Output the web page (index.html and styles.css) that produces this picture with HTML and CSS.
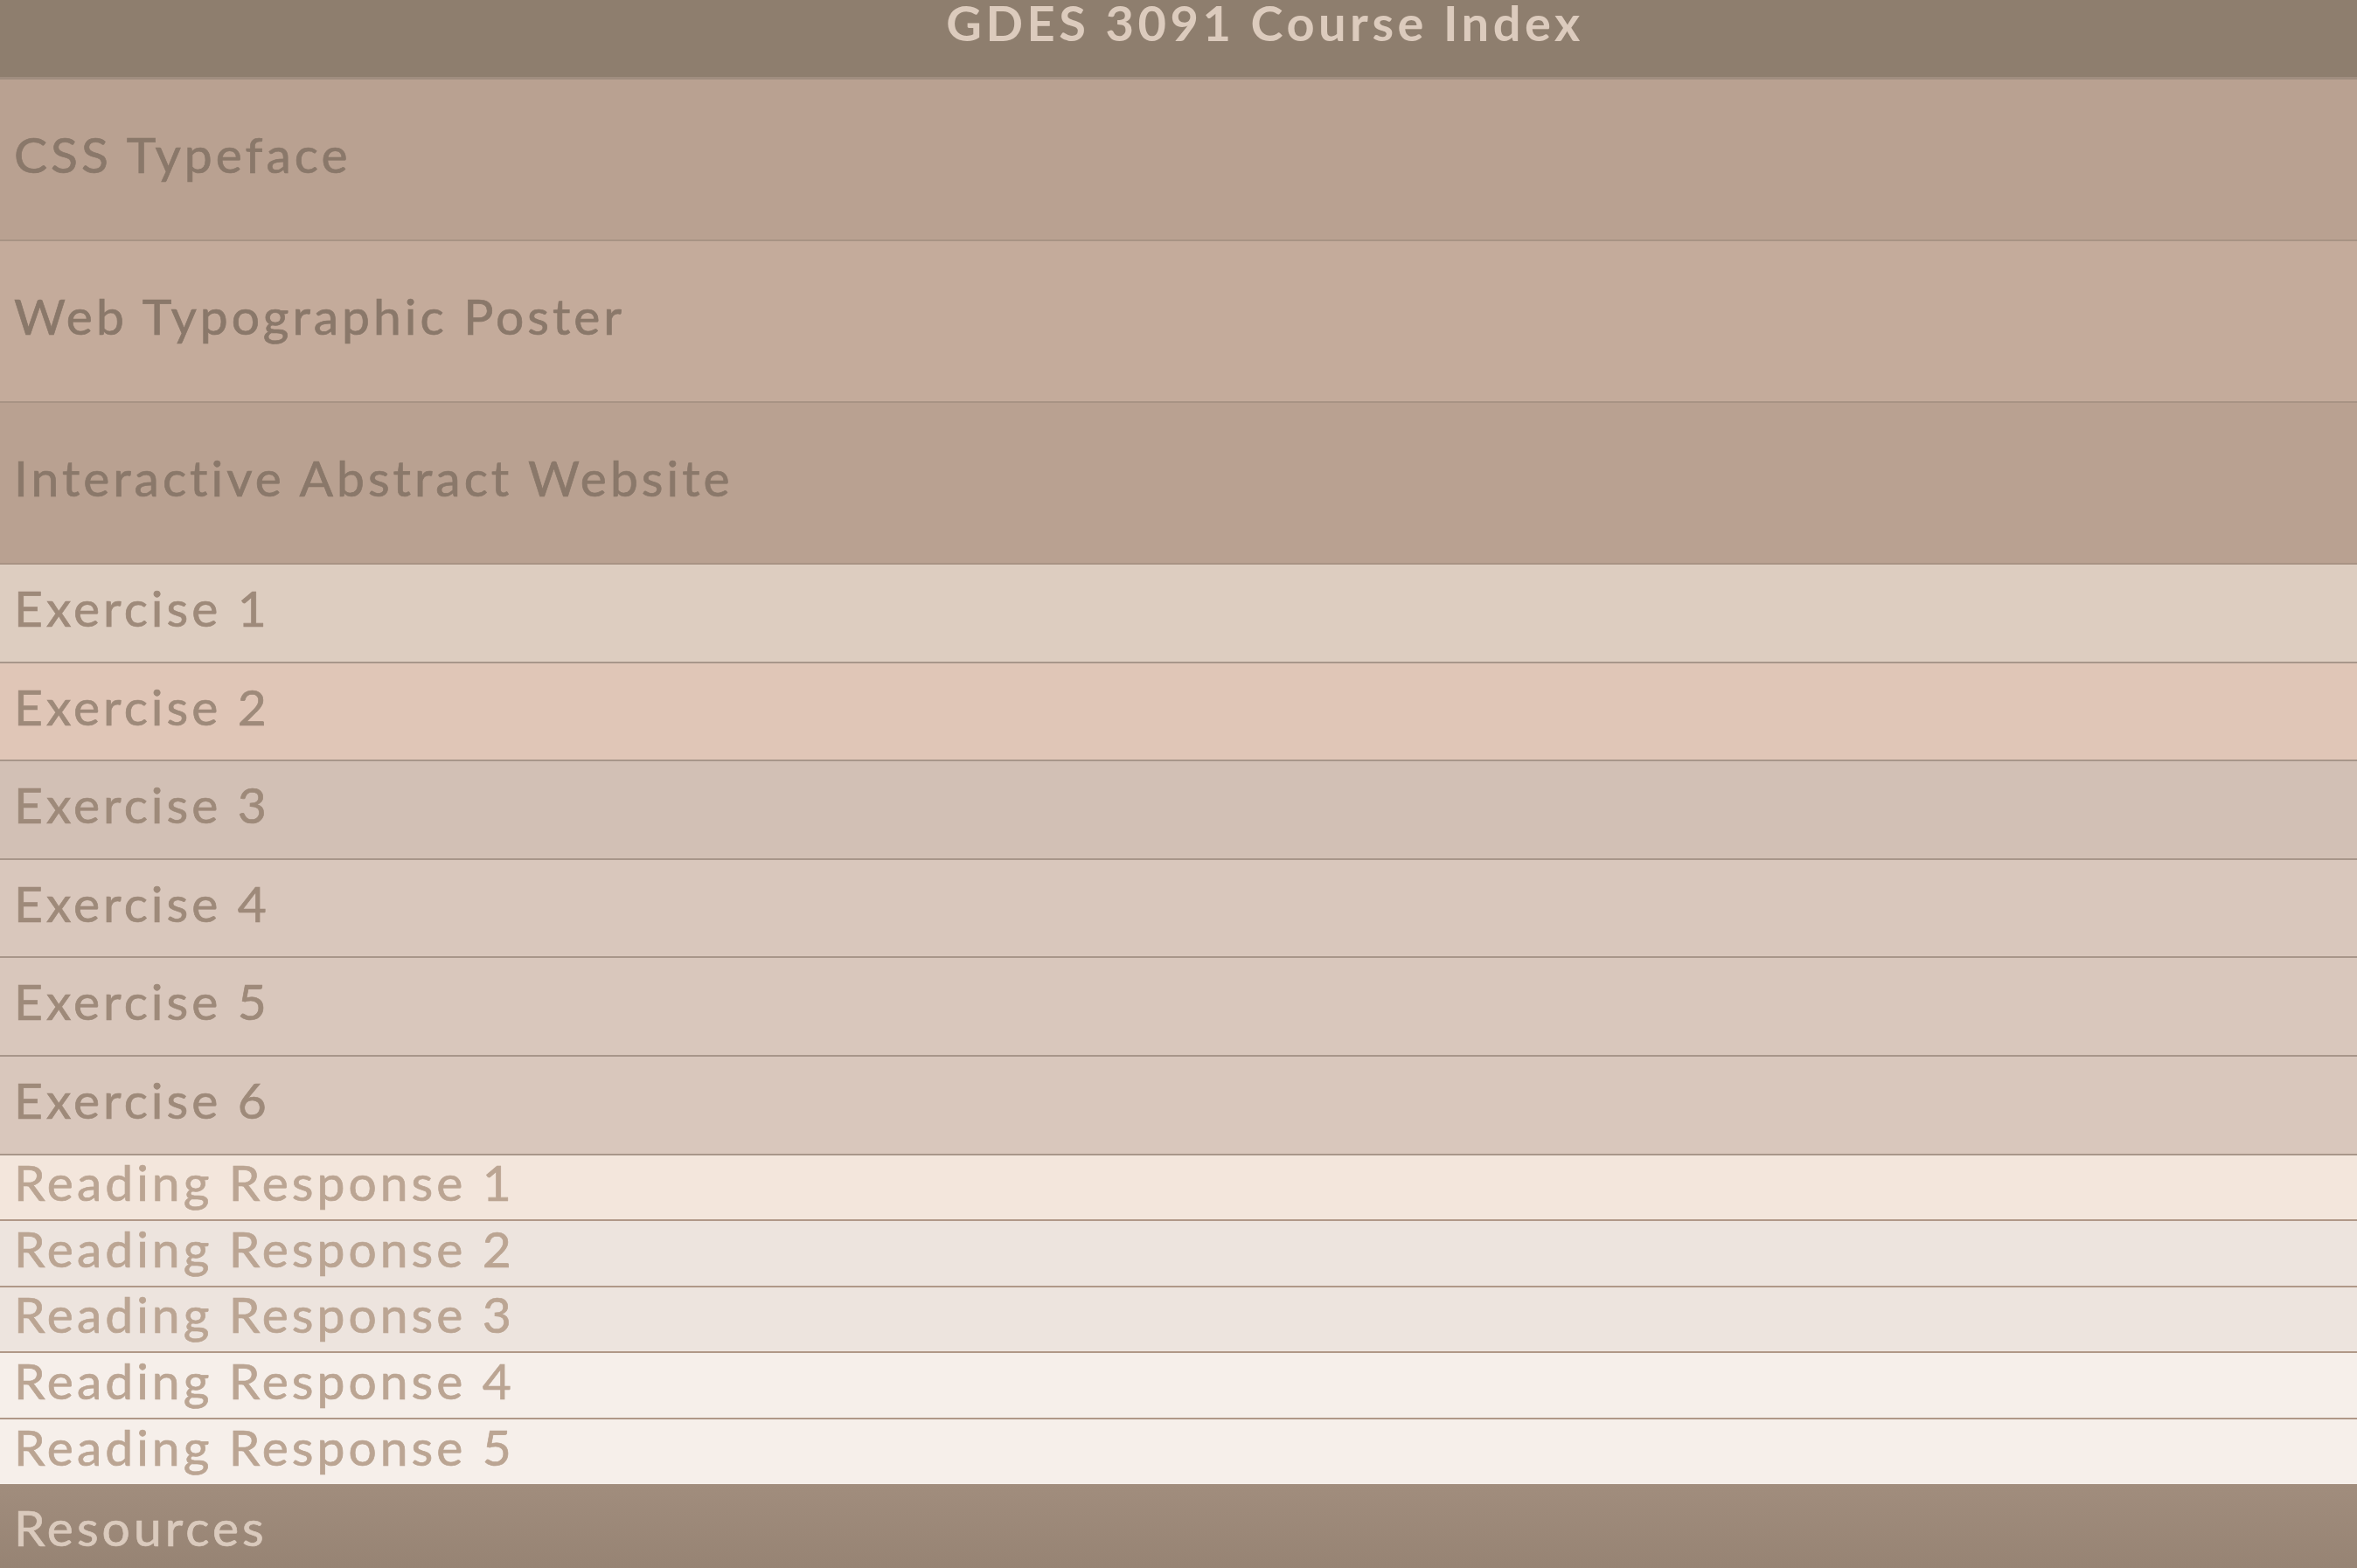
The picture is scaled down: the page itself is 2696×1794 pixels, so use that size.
FILE: index.html
```html
<!DOCTYPE html>
<html lang="en">
<head>
<meta charset="utf-8">
<title>GDES 3091 Course Index</title>
<link rel="stylesheet" href="styles.css">
</head>
<body>
<header class="site-header">
  <h1 class="site-title">GDES 3091 Course Index</h1>
</header>
<nav class="index">
  <a class="row row-project row-p1" href="#">CSS Typeface</a>
  <a class="row row-project row-p2" href="#">Web Typographic Poster</a>
  <a class="row row-project row-p3" href="#">Interactive Abstract Website</a>
  <a class="row row-exercise row-e1" href="#">Exercise 1</a>
  <a class="row row-exercise row-e2" href="#">Exercise 2</a>
  <a class="row row-exercise row-e3" href="#">Exercise 3</a>
  <a class="row row-exercise row-e4" href="#">Exercise 4</a>
  <a class="row row-exercise row-e5" href="#">Exercise 5</a>
  <a class="row row-exercise row-e6" href="#">Exercise 6</a>
  <a class="row row-reading row-r1" href="#">Reading Response 1</a>
  <a class="row row-reading row-r2" href="#">Reading Response 2</a>
  <a class="row row-reading row-r3" href="#">Reading Response 3</a>
  <a class="row row-reading row-r4" href="#">Reading Response 4</a>
  <a class="row row-reading row-r5" href="#">Reading Response 5</a>
  <a class="row row-resources" href="#">Resources</a>
</nav>
</body>
</html>
```

FILE: styles.css
```css
html, body {
  margin: 0;
  padding: 0;
}

body {
  font-family: Lato, "Noto Sans", sans-serif;
  background: #f6efea;
  overflow: hidden;
}

.site-header {
  height: 88px;
  background: #8e7e6e;
  border-bottom: 3px solid #a08e80;
  box-sizing: content-box;
}

.site-title {
  margin: 0;
  padding-left: 198px;
  text-align: center;
  font-size: 56px;
  line-height: 52px;
  font-weight: 700;
  letter-spacing: 0.08em;
  color: #dccbbd;
}

.index {
  display: flex;
  flex-direction: column;
}

.row {
  display: flex;
  align-items: center;
  box-sizing: border-box;
  padding: 0 0 12px 16px;
  font-size: 57px;
  line-height: 1.2;
  letter-spacing: 0.07em;
  -webkit-text-stroke: 0.7px currentColor;
  text-decoration: none;
  border-bottom: 2px solid #a8968a;
  white-space: nowrap;
}

.row-project {
  height: 185px;
  color: #8a786a;
  border-bottom-color: #a89384;
}

.row-p1 { background: #b9a191; }
.row-p2 { background: #c4ab9b; }
.row-p3 { background: #b9a191; }

.row-exercise {
  height: 112.6px;
  color: #9e8a7a;
}

.row-e1 { background: #ddcdc0; }
.row-e2 { background: #e0c6b7; }
.row-e3 { background: #d2c0b5; }
.row-e4 { background: #d9c7bc; }
.row-e5 { background: #d9c7bc; }
.row-e6 { background: #d9c7bc; }

.row-reading {
  height: 75.6px;
  color: #bba593;
  border-bottom-color: #b09888;
}

.row-r1 { background: #f3e6dc; }
.row-r2 { background: #ede4de; }
.row-r3 { background: #ede4de; }
.row-r4 { background: #f6efea; }
.row-r5 {
  background: #f6efea;
  border-bottom: 0;
  height: 73.6px;
}

.row-resources {
  height: 112px;
  color: #dacabd;
  background: linear-gradient(#a18d7d, #958272);
  border-bottom: 0;
}
```
